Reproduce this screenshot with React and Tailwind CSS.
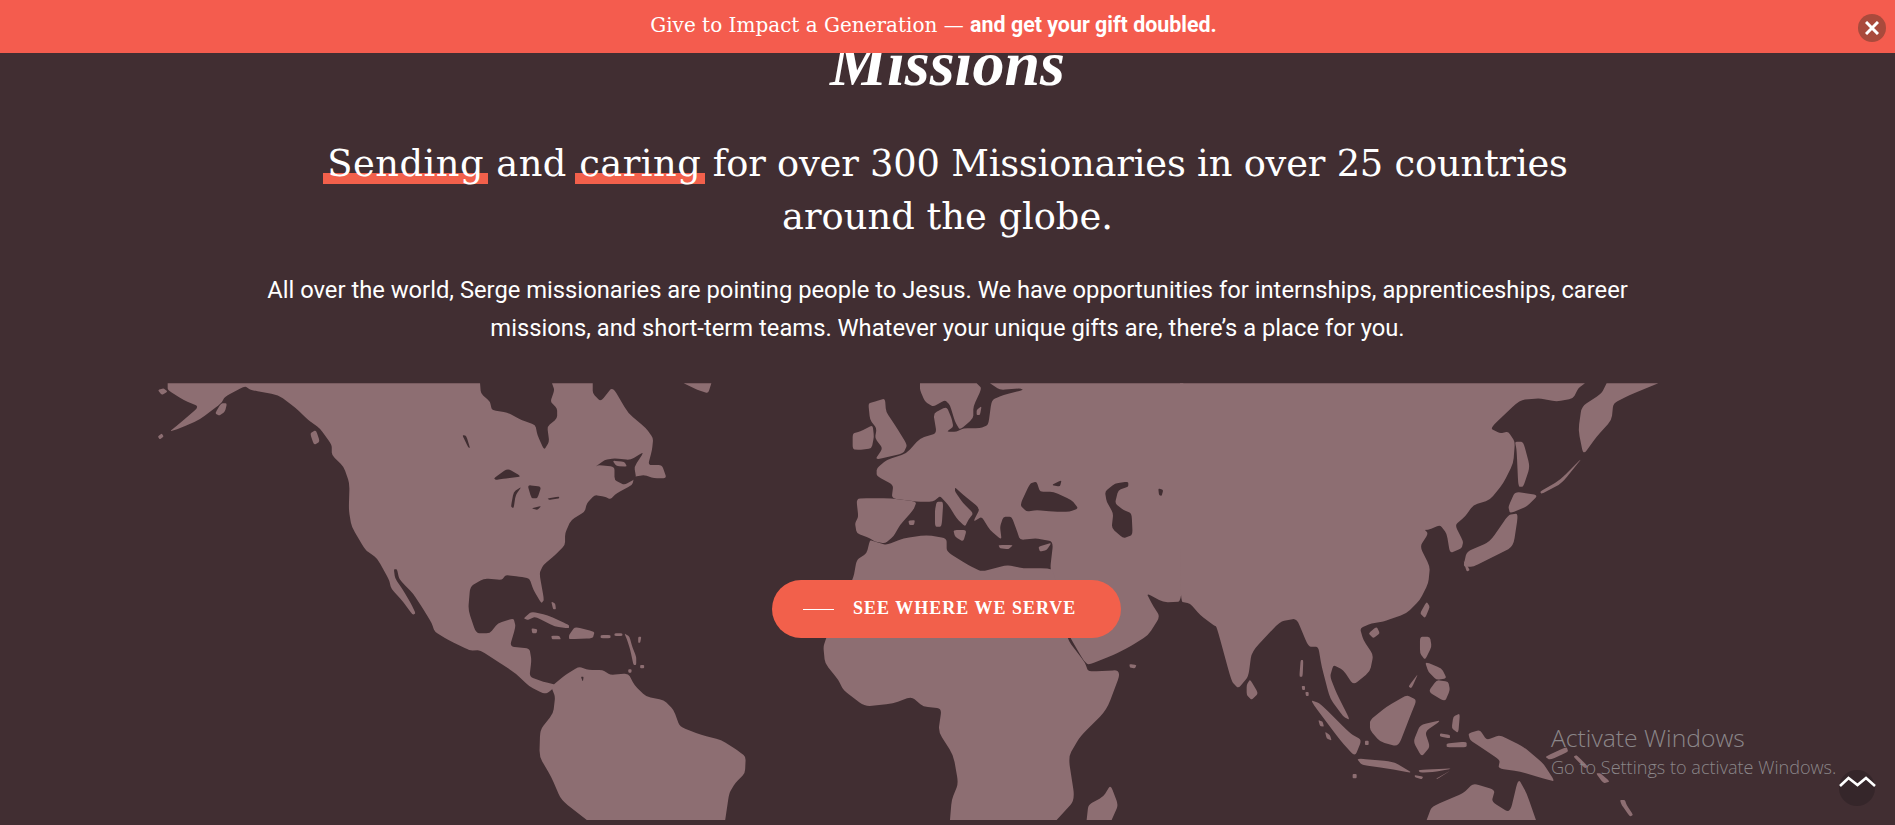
import React from 'react';

const LAND = '#8d6e72';
const SEA = '#412e32';

// traced in three pieces, each group has its own scale
const americasLand = [
  '70,40 860,40 862,70 885,95 890,120 930,128 965,150 1000,165 1005,195 1022,240 1035,215 1030,170 1055,145 1055,115 1038,95 1048,60 1042,40 1145,40 1145,70 1165,95 1195,50 1235,130 1280,175 1298,205 1295,240 1285,285 1320,285 1332,325 1300,325 1275,315 1250,320 1245,345 1205,370 1190,388 1175,380 1150,375 1130,400 1125,425 1090,450 1075,490 1075,525 1050,555 1020,585 1010,610 1022,690 1015,700 995,660 985,625 960,620 925,615 915,630 870,625 835,650 830,720 850,790 885,790 905,760 945,745 950,770 935,830 985,835 990,870 985,920 1020,935 1055,945 1030,970 1020,970 985,950 950,910 905,875 860,840 835,842 780,810 745,785 738,760 715,715 690,670 665,640 655,625 650,598 642,598 645,625 665,660 685,700 697,730 690,735 665,695 635,655 630,630 600,565 570,540 535,470 528,420 530,340 515,290 485,255 485,225 455,175 425,150 395,115 350,75 280,60 265,48 215,80 205,100 150,150 100,175 75,185 100,160 150,110 110,90 70,60',
  '1040,950 1075,915 1110,890 1135,900 1170,900 1190,915 1235,910 1250,945 1280,980 1325,990 1350,1020 1365,1070 1420,1095 1470,1110 1510,1140 1532,1160 1530,1210 1505,1240 1490,1270 1480,1350 1130,1350 1065,1290 1040,1220 1010,1160 1012,1080 1045,1030 1050,980',
  '45,60 60,55 70,65 55,75',
  '45,200 55,190 60,200 50,208',
  '190,130 205,100 220,100 215,125 200,137',
  '430,190 445,180 455,215 440,225',
  '1375,40 1445,40 1437,70 1410,60',
  '970,745 990,725 1030,735 1085,765 1085,775 1050,770 1000,740 980,750',
  '990,775 1005,778 1003,790 992,790',
  '1040,797 1060,797 1065,808 1042,808',
  '1085,795 1100,770 1150,785 1145,805 1085,808',
  '1040,695 1050,700 1052,718 1045,718',
  '1165,795 1190,795 1190,805 1165,805',
  '1200,790 1220,790 1220,798 1200,798',
  '1225,790 1238,800 1245,830 1255,860 1255,885 1248,885 1240,840 1232,810',
  '1235,898 1243,898 1243,908 1235,908',
  '1260,800 1268,800 1265,818 1260,818',
  '1265,885 1275,885 1275,895 1265,895',
];
const americasSea = [
  '815,195 825,197 835,235 830,232',
  '895,325 930,295 965,320 925,325 900,330',
  '938,410 945,365 965,350 950,375 945,415',
  '980,345 1015,350 1005,385 990,385',
  '990,415 1015,408 1005,420',
  '1030,385 1060,380 1060,385 1035,390',
  '1152,290 1175,270 1200,265 1240,270 1275,245 1250,290 1255,325 1225,345 1200,330 1200,290 1160,285',
  '1115,920 1122,920 1120,935',
];
const americasIslandsInSea = ['1195,272 1225,275 1232,290 1205,288'];

const europeAfricaLand = [
  '690,40 1270,40 1270,695 1210,697 1160,670 1175,700 1200,740 1165,795 1110,830 1060,855 985,885 970,870 935,810 900,740 870,600 880,515 830,505 780,510 770,480 755,440 730,440 720,470 725,510 690,480 665,440 640,455 660,415 610,375 585,352 585,365 610,400 640,430 625,450 615,470 590,445 565,405 540,378 520,395 470,395 395,385 400,345 350,318 350,295 380,270 440,250 480,205 530,190 520,130 560,110 575,145 580,170 560,185 590,185 610,175 660,175 685,165 695,90 730,75 790,60 780,55 720,60',
  '295,385 395,385 470,395 460,420 420,465 400,500 375,520 345,515 330,505 290,490 285,460 295,440 290,395',
  '480,40 650,40 665,55 640,110 640,145 600,180 585,155 570,105 555,90 520,110 495,95 480,60',
  '325,100 345,95 375,85 378,125 405,165 442,225 430,250 345,270 368,235 345,205 350,175 330,150',
  '278,190 300,185 338,165 342,200 335,235 300,240 278,238',
  '345,515 330,510 320,550 290,570 280,625 200,800 190,830 195,880 235,930 250,960 315,1010 400,1000 455,980 490,1010 545,1015 535,1085 580,1155 595,1240 575,1290 570,1350 890,1350 945,1290 925,1160 960,1100 1040,1020 1085,900 985,905 975,878 920,805 880,600 860,595 790,595 740,585 665,605 625,585 560,545 560,505 500,495 430,505 380,525',
  '980,1350 985,1305 1030,1280 1052,1245 1075,1305 1055,1350',
  '1108,882 1130,885 1125,895 1110,893',
  '525,420 530,395 550,395 545,470 525,470',
  '445,452 465,450 462,465 448,465',
  '580,480 620,480 610,515 585,500',
  '715,525 760,525 745,538 720,535',
  '835,530 875,518 860,540 840,545',
  '650,120 665,108 660,135 650,135',
];
const europeAfricaSea = [
  '780,405 810,340 830,335 840,365 880,365 935,390 955,415 930,425 880,425 830,420 800,425',
  '875,345 905,330 900,350',
  '1035,365 1065,340 1105,335 1105,350 1075,360 1065,400 1090,420 1115,430 1118,495 1090,505 1055,475 1060,430 1040,395',
  '1195,355 1210,360 1205,378 1197,375',
];

const asiaLand = [
  '0,40 1215,40 1195,55 1180,85 1130,95 1080,85 1020,90 930,175 960,190 985,185 1005,215 1000,280 970,340 930,390 880,405 855,440 825,465 850,515 845,535 810,550 800,490 780,465 745,480 695,480 740,450 725,470 745,490 720,530 750,590 745,640 720,690 680,730 610,755 575,760 540,775 550,810 580,855 570,905 520,945 490,900 460,885 450,920 470,970 510,1050 490,1040 450,985 425,890 415,830 385,830 350,745 300,755 215,845 205,920 175,955 155,935 110,770 100,765 60,735 30,700 0,695',
  '1280,40 1435,40 1350,75 1300,100 1295,150 1250,200 1210,255 1195,180 1205,110 1265,70',
  '565,790 590,770 600,790 580,805',
  '720,730 740,695 750,710 735,745',
  '200,945 210,928 235,970 215,990 200,975',
  '1005,215 1030,215 1050,290 1030,350 1015,350 1010,240',
  '1005,365 1075,375 1040,410 990,430 985,410',
  '985,435 1015,430 1000,530 940,560 880,590 850,590 860,545 930,515',
  '850,570 870,600 860,605',
  '1080,365 1140,330 1210,260 1145,340 1085,372',
  '358,920 362,870 370,870 368,920',
  '365,948 375,948 375,960 367,960',
  '376,966 386,966 386,978 378,978',
  '390,990 420,1000 510,1090 545,1110 525,1160 480,1110',
  '415,1050 428,1055 432,1070 420,1068',
  '435,1085 450,1095 455,1112 440,1105',
  '570,1050 620,1010 680,975 710,990 690,1040 655,1130 600,1115 570,1080',
  '720,1065 785,1050 735,1085 750,1130 725,1160 700,1115',
  '530,1165 640,1175 700,1210 620,1195 545,1185',
  '715,1200 820,1195 770,1205 720,1208',
  '770,1225 815,1200 770,1228',
  '704,1215 730,1220 725,1228 705,1222',
  '720,800 750,800 755,830 735,870 720,850',
  '735,875 785,895 800,925 770,930 745,905',
  '770,930 805,935 810,960 795,995 745,965',
  '685,950 715,910 695,955',
  '820,1040 840,1030 835,1090 815,1075',
  '780,1090 810,1095 810,1105 780,1100',
  '800,1120 860,1115 860,1132 800,1132',
  '555,1112 566,1112 566,1125 555,1125',
  '518,1212 530,1212 530,1225 518,1225',
  '865,1090 900,1080 920,1110 960,1095 1030,1130 1090,1180 1125,1235 1090,1225 1020,1205 955,1195 960,1170 900,1130 870,1110',
  '740,1350 755,1310 850,1270 880,1240 945,1260 935,1295 990,1330 1015,1225 1040,1270 1068,1350',
  '1095,1160 1160,1130 1165,1145 1110,1170',
  '1180,1160 1190,1155 1225,1190 1215,1195',
  '1248,1210 1262,1210 1290,1235 1270,1240',
  '1320,1290 1335,1290 1340,1305 1360,1335 1350,1340 1325,1305',
];
const asiaSea = [];

// rounds the traced corners a little so the coast doesn't look cut with scissors
function smooth(points) {
  const pts = points.split(' ').map((p) => p.split(',').map(Number));
  let d = '';
  pts.forEach((p, i) => {
    const prev = pts[(i - 1 + pts.length) % pts.length];
    const next = pts[(i + 1) % pts.length];
    // corners on the straight top and bottom cut stay sharp
    const flat = p[1] <= 40 || p[1] >= 1350;
    const a = flat ? p : [p[0] + (prev[0] - p[0]) * 0.25, p[1] + (prev[1] - p[1]) * 0.25];
    const b = flat ? p : [p[0] + (next[0] - p[0]) * 0.25, p[1] + (next[1] - p[1]) * 0.25];
    d += `${i === 0 ? 'M' : 'L'}${a[0]} ${a[1]} Q${p[0]} ${p[1]} ${b[0]} ${b[1]} `;
  });
  return d + 'Z';
}

function Land({ land, sea, transform }) {
  return (
    <g transform={transform}>
      {land.map((p, i) => (
        <path key={i} d={smooth(p)} fill={LAND} />
      ))}
      {sea.map((p, i) => (
        <path key={i} d={smooth(p)} fill={SEA} />
      ))}
    </g>
  );
}

function WorldMap() {
  return (
    <svg viewBox="0 0 1895 442" className="block w-full h-[442px]">
      <Land land={americasLand} sea={americasSea} transform="translate(140 -13) scale(0.3954 0.3333)" />
      <Land land={americasIslandsInSea} sea={[]} transform="translate(140 -13) scale(0.3954 0.3333)" />
      <Land land={europeAfricaLand} sea={europeAfricaSea} transform="translate(760 -13) scale(0.3333)" />
      <Land land={asiaLand} sea={asiaSea} transform="translate(1180 -13) scale(0.3333)" />
    </svg>
  );
}

function Marked({ children }) {
  return (
    <span className="relative inline-block">
      <span className="absolute left-[-4px] right-[-4px] top-[36px] h-[11px] bg-[#f2604b]"></span>
      <span className="relative">{children}</span>
    </span>
  );
}

export default function App() {
  return (
    <div className="relative h-screen overflow-hidden bg-[#412e32] text-white font-['Roboto',sans-serif]">
      {/* top banner */}
      <div className="absolute top-0 left-0 right-0 z-10 h-[53px] bg-[#f45c4e] flex items-center justify-center pb-[3px] pr-[28px]">
        <p className="text-[21.4px] leading-none whitespace-nowrap">
          <span className="font-['DejaVu_Serif',serif] text-[20px]">Give to Impact a Generation — </span>
          <span className="font-bold">and get your gift doubled.</span>
        </p>
        <button className="absolute right-[9px] top-[14px] w-[28px] h-[28px] rounded-full bg-[#a94a3c] flex items-center justify-center">
          <svg viewBox="0 0 14 14" className="w-[14px] h-[14px]">
            <path d="M1 1 L13 13 M13 1 L1 13" stroke="#fff" strokeWidth="3" fill="none" />
          </svg>
        </button>
      </div>

      <main className="flex flex-col items-center">
        <h2 className="mt-[24px] h-[80px] text-[64px] leading-[80px] font-bold italic font-['Liberation_Serif',serif]">
          Missions
        </h2>
        <h1 className="mt-[33px] w-[1300px] text-center text-[36.8px] leading-[53px] font-['DejaVu_Serif',serif]">
          <span className="tracking-[0.5px]">
            <Marked>Sending</Marked> and <Marked>caring</Marked>
          </span>
          <span className="tracking-[-0.2px]"> for over 300 Missionaries in over 25 countries</span>
          <br />
          around the globe.
        </h1>
        <p className="mt-[29px] w-[1400px] text-center text-[23.75px] leading-[37.5px]">
          All over the world, Serge missionaries are pointing people to Jesus. We have opportunities for internships, apprenticeships, career
          <br />
          missions, and short-term teams. Whatever your unique gifts are, there’s a place for you.
        </p>

        <section className="relative mt-[36px] w-full">
          <WorldMap />
          <a className="absolute left-[772px] top-[197px] w-[349px] h-[58px] rounded-[29px] bg-[#f2604b] flex items-center pl-[31px]">
            <span className="w-[31px] h-px bg-white mt-[1px]"></span>
            <span className="ml-[19px] mb-[2px] text-[18px] font-bold tracking-[1px] font-['Liberation_Serif',serif] uppercase whitespace-nowrap">
              See where we serve
            </span>
          </a>
        </section>
      </main>

      {/* windows watermark */}
      <div className="absolute left-[1551px] top-[723px] font-['Open_Sans',sans-serif] font-light text-[#8b8689]">
        <p className="text-[24.7px] leading-[30px]">Activate Windows</p>
        <p className="text-[18.1px] leading-[24px] mt-[2px]">Go to Settings to activate Windows.</p>
      </div>

      {/* back to top */}
      <button className="absolute left-[1839px] top-[770px] w-[36px] h-[36px] rounded-full bg-[#35262a]">
        <svg viewBox="0 0 36 36" className="w-[36px] h-[36px] overflow-visible">
          <path d="M1 16 L9.5 8 L18.5 15 L27 8 L36 16" stroke="#fff" strokeWidth="2.6" fill="none" />
        </svg>
      </button>
    </div>
  );
}
